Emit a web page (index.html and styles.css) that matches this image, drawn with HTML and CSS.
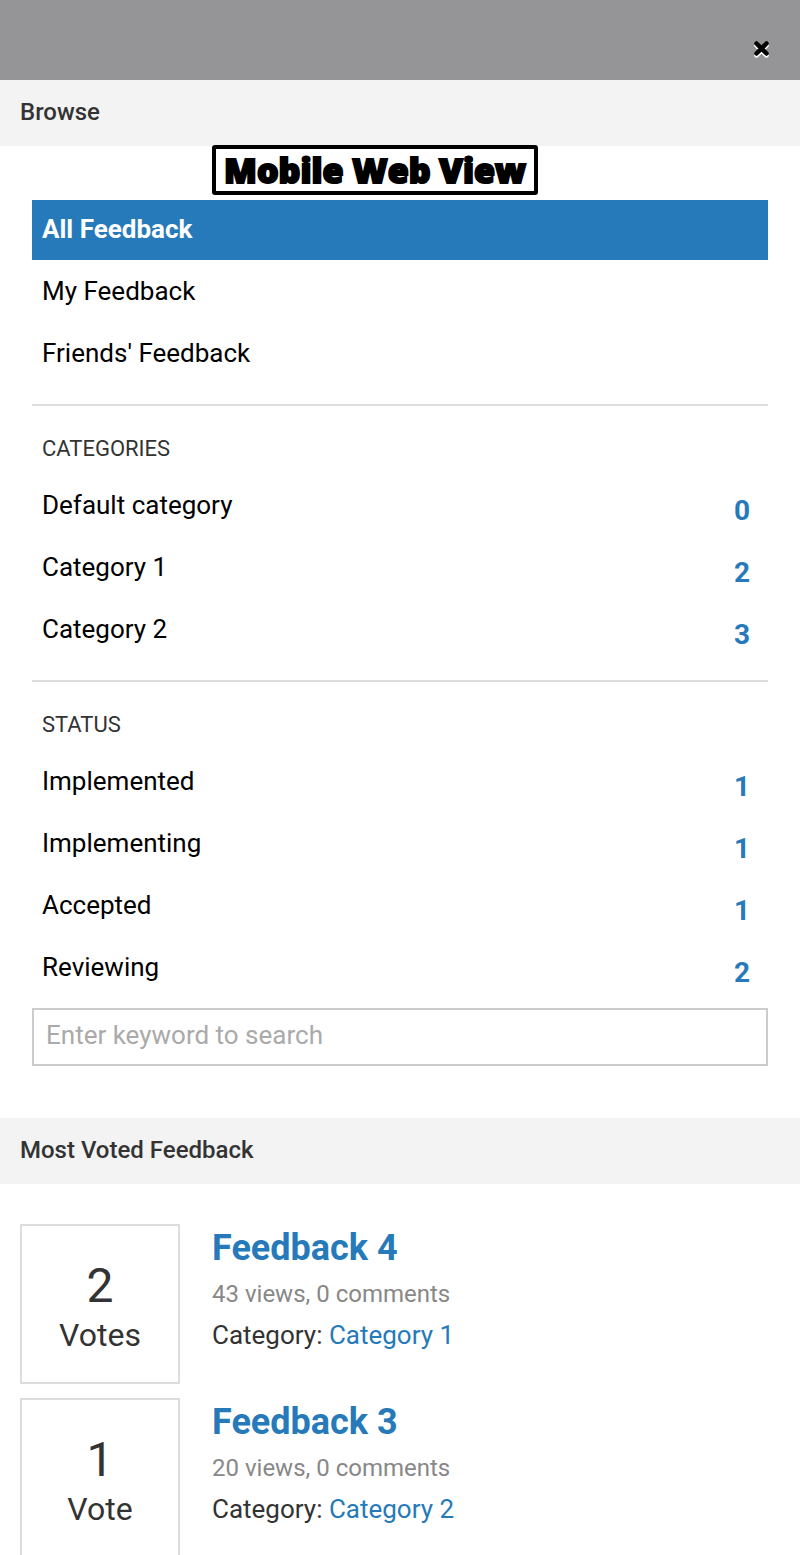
FILE: index.html
```html
<!DOCTYPE html>
<html lang="en">
<head>
  <meta charset="UTF-8" />
  <meta name="viewport" content="width=device-width, initial-scale=1" />
  <title>Feedback</title>
  <link rel="stylesheet" href="styles.css">
</head>
<body>
  <div class="page">
    <div class="topbar">
      <button type="button" class="close" aria-label="Close">
        <svg width="20" height="22" viewBox="0 0 20 22">
          <path d="M4.5 7.5 L14.5 17.5 M14.5 7.5 L4.5 17.5" stroke="#fff" stroke-width="4.5" stroke-linecap="round" />
          <path d="M4.5 5.5 L14.5 15.5 M14.5 5.5 L4.5 15.5" stroke="#000" stroke-width="4.5" stroke-linecap="round" />
        </svg>
      </button>
    </div>

    <h2 class="section-title">Browse</h2>
    <div class="browse">
      <div class="view-label">Mobile Web View</div>

      <ul class="menu">
        <li><a href="#" class="active">All Feedback</a></li>
        <li><a href="#">My Feedback</a></li>
        <li><a href="#">Friends' Feedback</a></li>
      </ul>

      <h3>Categories</h3>
      <ul class="menu">
        <li><a href="#">Default category <span class="count">0</span></a></li>
        <li><a href="#">Category 1 <span class="count">2</span></a></li>
        <li><a href="#">Category 2 <span class="count">3</span></a></li>
      </ul>

      <h3>Status</h3>
      <ul class="menu">
        <li><a href="#">Implemented <span class="count">1</span></a></li>
        <li><a href="#">Implementing <span class="count">1</span></a></li>
        <li><a href="#">Accepted <span class="count">1</span></a></li>
        <li><a href="#">Reviewing <span class="count">2</span></a></li>
      </ul>

      <form class="search">
        <input type="text" placeholder="Enter keyword to search" aria-label="Search feedback">
      </form>
    </div>

    <h2 class="section-title">Most Voted Feedback</h2>
    <div class="feedback-list">
      <div class="feedback">
        <div class="votes"><span class="number">2</span>Votes</div>
        <div class="info">
          <a href="#" class="title">Feedback 4</a>
          <p class="stats">43 views, 0 comments</p>
          <p>Category: <a href="#">Category 1</a></p>
        </div>
      </div>
      <div class="feedback">
        <div class="votes"><span class="number">1</span>Vote</div>
        <div class="info">
          <a href="#" class="title">Feedback 3</a>
          <p class="stats">20 views, 0 comments</p>
          <p>Category: <a href="#">Category 2</a></p>
        </div>
      </div>
    </div>
  </div>
</body>
</html>
```
FILE: styles.css
```css
* { box-sizing: border-box; }
body { margin: 0; font-family: Roboto, sans-serif; font-size: 26px; color: #333; background: #fff; }
a { color: #267aba; text-decoration: none; }
h2, h3, p, ul { margin: 0; padding: 0; }

.page { height: 100vh; overflow-y: auto; scrollbar-width: none; }

.topbar { display: flex; justify-content: flex-end; height: 80px; padding: 38px 28px 0; background: #959597; }
.close { height: 22px; padding: 0; border: 0; background: none; cursor: pointer; }
.close svg { display: block; }

.section-title { height: 66px; padding: 0 20px; background: #f3f3f3; font-size: 24px; font-weight: 500; line-height: 64px; }

/* browse menu */
.browse { position: relative; padding: 54px 32px 52px; }
.view-label {
  position: absolute; top: -1px; left: 212px; width: 326px; height: 50px;
  border: 4px solid #000; border-radius: 3px; background: #fff; color: #000;
  font: 800 34px/42px "Open Sans", sans-serif; text-align: center; white-space: nowrap;
  -webkit-text-stroke: 2px #000;
}
.browse h3 { margin-top: 20px; padding: 26px 10px 10px; border-top: 2px solid #ddd; font-size: 22px; font-weight: 400; line-height: 34px; text-transform: uppercase; }
.menu { display: grid; gap: 2px; list-style: none; }
.menu a { display: flex; justify-content: space-between; height: 60px; padding: 0 10px; color: #000; line-height: 58px; }
.menu a.active { background: #267aba; color: #fff; font-weight: 700; }
.menu .count { padding-right: 8px; color: #267aba; font-size: 28px; font-weight: 700; line-height: 70px; }

.search { margin-top: 10px; }
.search input { display: block; width: 100%; height: 58px; padding: 0 12px 4px; border: 2px solid #ccc; border-radius: 0; font: inherit; }
.search input::placeholder { color: #aaa; }

/* feedback list */
.feedback-list { display: grid; gap: 14px; padding: 40px 20px; }
.feedback { display: flex; gap: 32px; }
.votes { width: 160px; height: 160px; padding-top: 34px; border: 2px solid #ddd; font-size: 32px; line-height: 46px; text-align: center; }
.votes .number { display: block; font-size: 48px; line-height: 52px; }
.info { flex: 1; line-height: 38px; }
.info .title { display: block; font-size: 36px; font-weight: 700; line-height: 48px; }
.info .stats { color: #888; font-size: 24px; line-height: 44px; }
```
